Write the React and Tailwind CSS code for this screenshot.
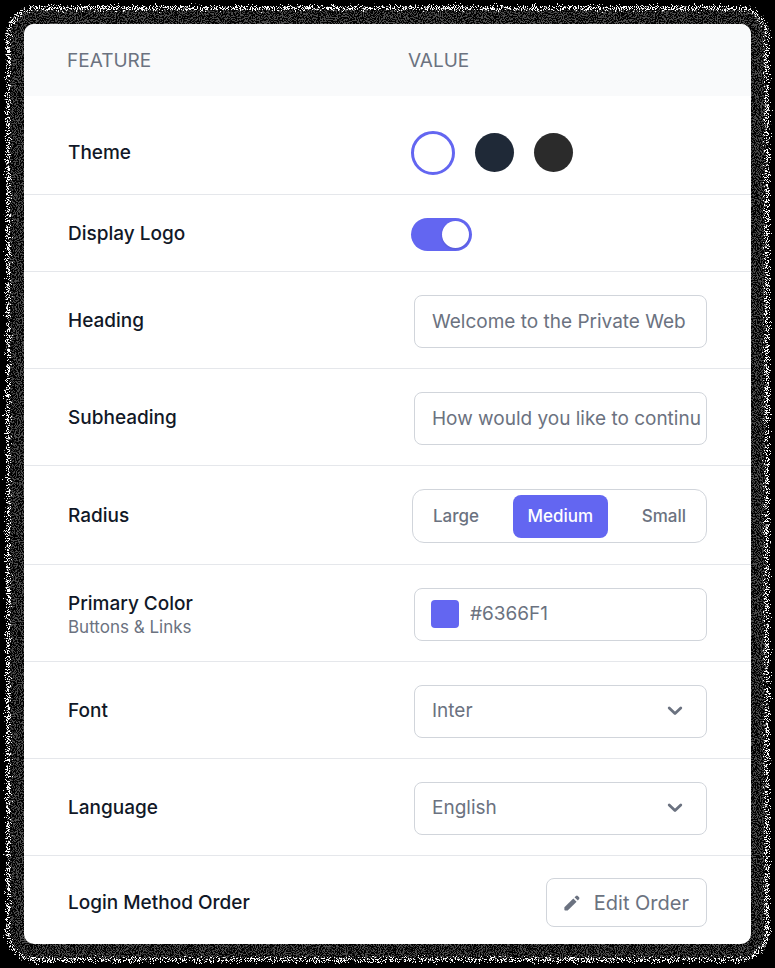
import { useState } from "react";

const FIELD =
  "block h-[53px] w-full rounded-lg border border-[#d1d5db] bg-white pl-[17px] text-[19px] leading-6 text-[#6b7280] outline-none";

function Row({ label, htmlFor, hint, size = "h-[97px] pt-[2px]", last = false, children }) {
  const line = last ? "" : "border-b border-[#e5e7eb]";
  return (
    <tr>
      <th scope="row" className={`${size} ${line} pl-11 text-left align-middle font-medium`}>
        <div className={hint ? "pt-[2px]" : ""}>
          <label htmlFor={htmlFor} className="block text-[19px] leading-6 text-[#111827]">
            {label}
          </label>
          {hint && <span className="block text-[17px] leading-[22px] font-normal text-[#6b7280]">{hint}</span>}
        </div>
      </th>
      <td className={`${size} ${line} pr-11 align-middle`}>{children}</td>
    </tr>
  );
}

function SelectField({ id, options }) {
  return (
    <div className="relative ml-[6px]">
      <select id={id} className={`${FIELD} appearance-none pr-14`}>
        {options.map((option) => (
          <option key={option}>{option}</option>
        ))}
      </select>
      <svg
        viewBox="0 0 16 10"
        aria-hidden="true"
        className="pointer-events-none absolute top-[21px] right-6 h-[10px] w-4 text-[#6b7280]"
      >
        <path d="M2.2 2 L8 7.6 L13.8 2" fill="none" stroke="currentColor" strokeWidth="2.8" strokeLinecap="round" strokeLinejoin="round" />
      </svg>
    </div>
  );
}

function Grain() {
  return (
    <>
      <svg aria-hidden="true" className="absolute size-0">
        <filter id="speckle" x="-2%" y="-2%" width="104%" height="104%" colorInterpolationFilters="sRGB">
          <feTurbulence type="fractalNoise" baseFrequency="0.95" numOctaves="2" seed="4" result="noise" />
          <feColorMatrix
            in="noise"
            type="matrix"
            values="22 0 0 0 -10.6  22 0 0 0 -10.6  22 0 0 0 -10.6  0 0 0 0 1"
            result="dots"
          />
          <feDisplacementMap in="SourceGraphic" in2="noise" scale="12" xChannelSelector="G" yChannelSelector="B" result="edge" />
          <feComposite in="dots" in2="edge" operator="in" />
        </filter>
        <filter id="soot" x="-2%" y="-2%" width="104%" height="104%" colorInterpolationFilters="sRGB">
          <feTurbulence type="fractalNoise" baseFrequency="0.95" numOctaves="2" seed="9" result="noise" />
          <feColorMatrix
            in="noise"
            type="matrix"
            values="12 0 0 0 -5.7  12 0 0 0 -5.7  12 0 0 0 -5.7  0 0 0 0 1"
          />
          <feColorMatrix
            type="matrix"
            values="0.3 0 0 0 0  0.3 0 0 0 0  0.3 0 0 0 0  0 0 0 0 1"
            result="dots"
          />
          <feDisplacementMap in="SourceGraphic" in2="noise" scale="10" xChannelSelector="G" yChannelSelector="B" result="edge" />
          <feComposite in="dots" in2="edge" operator="in" />
        </filter>
      </svg>
      <div className="absolute inset-[6px] rounded-[30px] bg-white [filter:url(#speckle)]" />
      <div className="absolute inset-[10px] rounded-[26px] bg-white [filter:url(#soot)]" />
    </>
  );
}

export default function App() {
  const [theme, setTheme] = useState("light");
  const [radius, setRadius] = useState("Medium");
  const [logo, setLogo] = useState(true);

  const themes = [
    { id: "light", style: "size-11 border-[3px] border-[#6366f1] bg-white" },
    { id: "navy", style: "size-[39px] bg-[#1f2937]" },
    { id: "dark", style: "size-[39px] bg-[#2b2b2b]" },
  ];

  return (
    <main className="relative min-h-screen bg-black p-6 font-['Inter','Liberation_Sans',sans-serif]">
      <Grain />
      <div className="relative overflow-hidden rounded-[10px] bg-white">
        <table className="w-full table-fixed border-separate border-spacing-0">
          <thead>
            <tr className="bg-[#f9fafb] text-left text-[19px] leading-6 text-[#6b7280]">
              <th scope="col" className="h-[72px] w-[384px] pt-[2px] pl-[43px] font-normal">FEATURE</th>
              <th scope="col" className="h-[72px] pt-[2px] font-normal">VALUE</th>
            </tr>
          </thead>
          <tbody>
            <Row label="Theme" size="h-[99px] pt-[15px]">
              <div role="radiogroup" aria-label="Theme" className="ml-[3px] flex items-center gap-5">
                {themes.map((t) => (
                  <input
                    key={t.id}
                    type="radio"
                    name="theme"
                    aria-label={t.id}
                    checked={theme === t.id}
                    onChange={() => setTheme(t.id)}
                    className={`appearance-none rounded-full ${t.style}`}
                  />
                ))}
              </div>
            </Row>
            <Row label="Display Logo" htmlFor="logo" size="h-[77px] pt-[2px]">
              <input
                id="logo"
                type="checkbox"
                role="switch"
                checked={logo}
                onChange={() => setLogo(!logo)}
                className="ml-[3px] flex h-[33px] w-[61px] appearance-none items-center rounded-full bg-[#d1d5db] px-[3px] before:size-[27px] before:rounded-full before:bg-white before:shadow-sm checked:justify-end checked:bg-[#6366f1]"
              />
            </Row>
            <Row label="Heading" htmlFor="heading">
              <div className="ml-[6px]">
                <input id="heading" type="text" defaultValue="Welcome to the Private Web" className={FIELD} />
              </div>
            </Row>
            <Row label="Subheading" htmlFor="subheading">
              <div className="ml-[6px]">
                <input id="subheading" type="text" defaultValue="How would you like to continu" className={FIELD} />
              </div>
            </Row>
            <Row label="Radius" size="h-[99px] pt-[2px]">
              <div
                role="radiogroup"
                aria-label="Radius"
                className="ml-1 flex h-[54px] items-center justify-between rounded-xl border border-[#d1d5db] p-[5px]"
              >
                {["Large", "Medium", "Small"].map((option) => (
                  <label
                    key={option}
                    className="relative flex h-[43px] items-center rounded-lg px-[15px] text-[17px] leading-6 font-medium text-[#6b7280] has-checked:bg-[#6366f1] has-checked:text-white"
                  >
                    <input
                      type="radio"
                      name="radius"
                      checked={radius === option}
                      onChange={() => setRadius(option)}
                      className="sr-only"
                    />
                    {option}
                  </label>
                ))}
              </div>
            </Row>
            <Row label="Primary Color" htmlFor="color" hint="Buttons & Links">
              <div className="ml-[6px] flex h-[53px] items-center gap-[11px] rounded-lg border border-[#d1d5db] pl-4">
                <span className="size-7 shrink-0 rounded bg-[#6366f1]" />
                <input
                  id="color"
                  type="text"
                  defaultValue="#6366F1"
                  className="w-full min-w-0 bg-transparent text-[19px] leading-6 text-[#6b7280] outline-none"
                />
              </div>
            </Row>
            <Row label="Font" htmlFor="font">
              <SelectField id="font" options={["Inter", "Roboto", "Lato"]} />
            </Row>
            <Row label="Language" htmlFor="language">
              <SelectField id="language" options={["English", "Deutsch", "Español"]} />
            </Row>
            <Row label="Login Method Order" size="h-[88px] pt-[5px]" last>
              <button
                type="button"
                className="ml-auto flex h-[49px] items-center gap-[14px] rounded-lg border border-[#d1d5db] px-[17px] text-[20px] leading-6 text-[#6b7280]"
              >
                <svg viewBox="0 0 16 16" aria-hidden="true" className="size-4" fill="currentColor">
                  <path d="M0.4 12.3 L9.3 3.4 L12.6 6.7 L3.7 15.6 H1.2 Q0.4 15.6 0.4 14.8 Z" />
                  <path d="M10.5 2.2 L12 0.9 Q12.9 0.2 13.8 0.9 L15.1 2.2 Q15.8 3.1 15.1 4 L13.8 5.5 Z" />
                </svg>
                Edit Order
              </button>
            </Row>
          </tbody>
        </table>
      </div>
    </main>
  );
}
